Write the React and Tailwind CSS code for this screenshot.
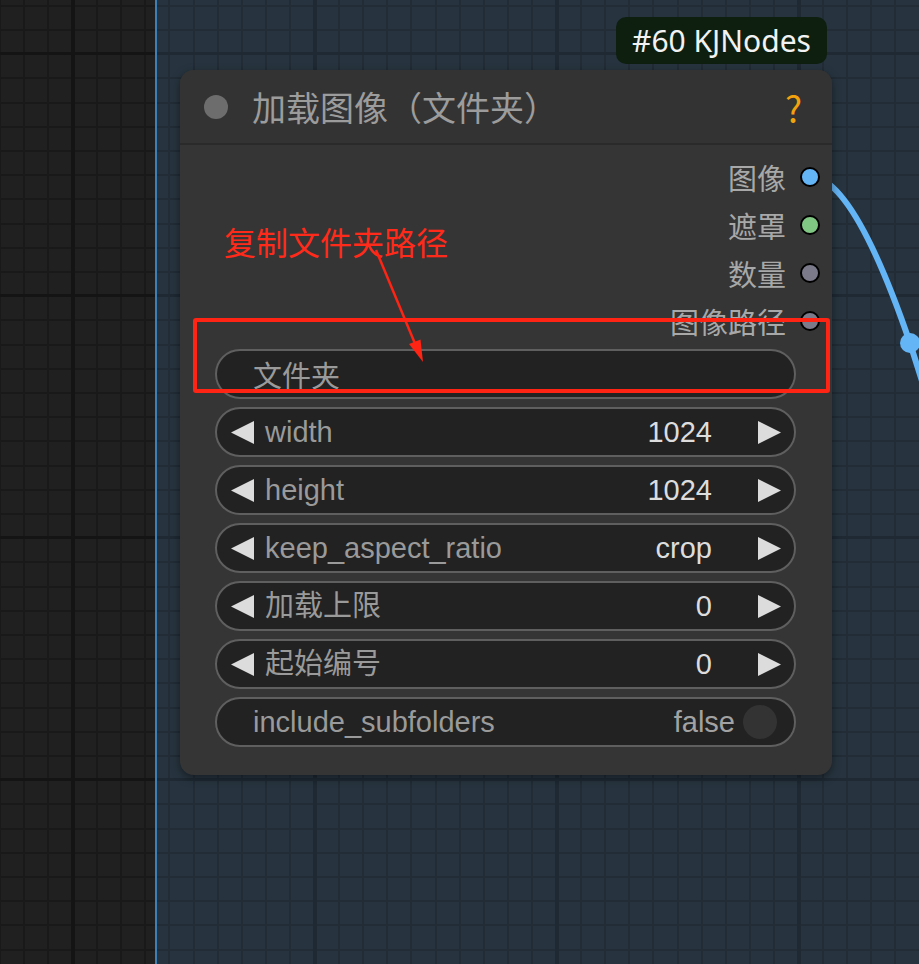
import React from "react";

const cjk = "font-['Noto_Sans_CJK_SC','Noto_Sans',sans-serif]";
const sans = "font-['Liberation_Sans','Noto_Sans_CJK_SC',sans-serif]";

function TriLeft() {
  return (
    <svg width="23" height="23" viewBox="0 0 23 23" className="shrink-0">
      <polygon points="0,11.5 23,0 23,23" fill="#dcdcdc" />
    </svg>
  );
}
function TriRight() {
  return (
    <svg width="23" height="23" viewBox="0 0 23 23" className="shrink-0">
      <polygon points="23,11.5 0,0 0,23" fill="#dcdcdc" />
    </svg>
  );
}

function NumberWidget({ label, value }) {
  return (
    <div className={`h-[50px] rounded-full border-2 border-[#5f5f5f] bg-[#222222] flex items-center pl-[14px] pr-[13px] ${sans} text-[29px] leading-none`}>
      <TriLeft />
      <span className="ml-[11px] text-[#9a9a9a]">{label}</span>
      <span className="flex-1" />
      <span className="text-[#dddddd]">{value}</span>
      <span className="ml-[46px] flex">
        <TriRight />
      </span>
    </div>
  );
}

function Output({ label, color }) {
  return (
    <div className="h-12 flex items-center justify-end pr-3 gap-[14px]">
      <span className={`${cjk} text-[29px] leading-none text-[#a8a8a8]`}>{label}</span>
      <span className={`w-5 h-5 rounded-full border-2 border-black ${color}`} />
    </div>
  );
}

export default function App() {
  return (
    <div className="relative w-[919px] h-[964px] overflow-hidden flex bg-[#1f1f1f]">
      <div className="w-[155px] h-full bg-[#202020] bg-[image:repeating-linear-gradient(to_right,transparent_0_70.6px,#141414_70.6px_74.6px,transparent_74.6px_242px),repeating-linear-gradient(to_bottom,transparent_0_52px,#141414_52px_55px,transparent_55px_242px),repeating-linear-gradient(to_right,#191919_0_1px,transparent_1px_23.2px,#191919_23.2px_24.2px),repeating-linear-gradient(to_bottom,transparent_0_4.7px,#191919_4.7px_6.7px,transparent_6.7px_24.2px)]" />
      <div className="w-[2px] h-full bg-[#3d80b8]" />
      <div className="flex-1 h-full bg-[#27343f] bg-[image:repeating-linear-gradient(to_right,transparent_0_155.6px,#1e2933_155.6px_159.6px,transparent_159.6px_242px),repeating-linear-gradient(to_bottom,transparent_0_52px,#1e2933_52px_55px,transparent_55px_242px),repeating-linear-gradient(to_right,transparent_0_11.4px,#212c36_11.4px_13.4px,transparent_13.4px_24.2px),repeating-linear-gradient(to_bottom,transparent_0_4.7px,#212c36_4.7px_6.7px,transparent_6.7px_24.2px)]" />

      {/* wire */}
      <svg className="absolute inset-0 pointer-events-none" width="919" height="964" viewBox="0 0 919 964">
        <path d="M815,177 C850,185 885,270 910,343 L928,400" fill="none" stroke="#64b5f6" strokeWidth="6" strokeLinecap="round" />
        <circle cx="910" cy="343" r="10" fill="#64b5f6" />
      </svg>

      {/* badge */}
      <div className="absolute left-[616px] top-[17px] w-[211px] h-[47px] rounded-[10px] bg-[#0e1f10] flex items-center justify-center">
        <span className="font-['Noto_Sans',sans-serif] text-[30px] leading-none text-[#f2f2f2]">#60 KJNodes</span>
      </div>

      {/* node */}
      <div className="absolute left-[180px] top-[70px] w-[652px] rounded-[14px] bg-[#353535] shadow-[0_3px_10px_rgba(0,0,0,0.45)] overflow-hidden">
        <div className="h-[75px] bg-[#333333] border-b-2 border-[#2a2a2a] flex items-center pl-6 pr-[30px]">
          <span className="w-6 h-6 rounded-full bg-[#6d6d6d]" />
          <span className={`ml-6 ${cjk} text-[34px] leading-none text-[#9c9c9c]`}>加载图像（文件夹）</span>
          <span className="flex-1" />
          <span className={`${cjk} text-[36px] leading-none text-[#f2a20d]`}>?</span>
        </div>
        <div className="pt-2">
          <Output label="图像" color="bg-[#64b5f6]" />
          <Output label="遮罩" color="bg-[#81c784]" />
          <Output label="数量" color="bg-[#7a7a8a]" />
          <Output label="图像路径" color="bg-[#7a7a8a]" />
        </div>
        <div className="mt-1 flex flex-col gap-2 pl-[35px] pr-[36px] pb-[28px]">
          <div className={`h-[50px] rounded-full border-2 border-[#5f5f5f] bg-[#222222] flex items-center pl-[36px] ${cjk} text-[29px] leading-none text-[#9a9a9a]`}>
            文件夹
          </div>
          <NumberWidget label="width" value="1024" />
          <NumberWidget label="height" value="1024" />
          <NumberWidget label="keep_aspect_ratio" value="crop" />
          <NumberWidget label="加载上限" value="0" />
          <NumberWidget label="起始编号" value="0" />
          <div className={`h-[50px] rounded-full border-2 border-[#5f5f5f] bg-[#222222] flex items-center pl-[36px] pr-[17px] ${sans} text-[29px] leading-none`}>
            <span className="text-[#9a9a9a]">include_subfolders</span>
            <span className="flex-1" />
            <span className="text-[#a2a2a2]">false</span>
            <span className="ml-2 w-[34px] h-[34px] rounded-full bg-[#333333]" />
          </div>
        </div>
      </div>

      {/* annotations */}
      <div className={`absolute left-[224px] top-[225px] ${cjk} text-[32px] leading-none text-[#ff2a1a]`}>复制文件夹路径</div>
      <div className="absolute left-[193px] top-[318px] w-[637px] h-[75px] border-4 border-[#ff2414] rounded-[3px]" />
      <svg className="absolute inset-0 pointer-events-none" width="919" height="964" viewBox="0 0 919 964">
        <line x1="376" y1="250" x2="416" y2="346" stroke="#ff2414" strokeWidth="2.5" />
        <polygon points="423,362 420.5,339.4 409,344" fill="#ff2414" />
      </svg>
    </div>
  );
}
